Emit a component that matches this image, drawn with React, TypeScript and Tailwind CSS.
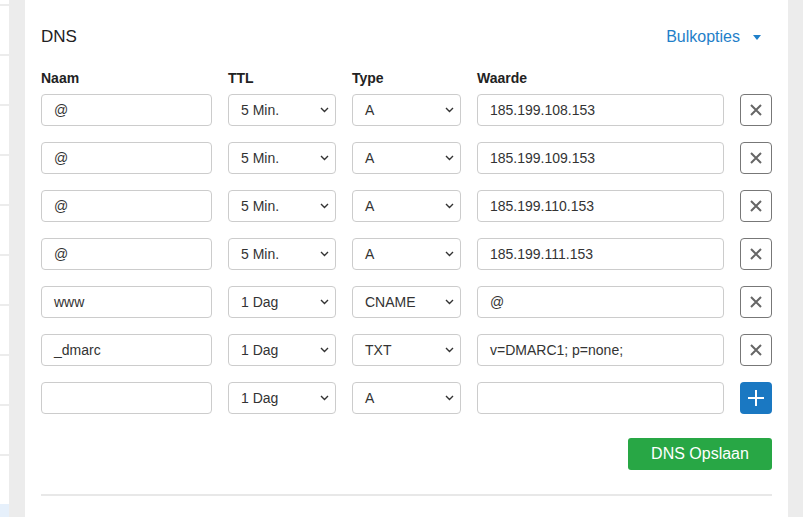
import React from 'react';

const rows = [
  { naam: '@', ttl: '5 Min.', type: 'A', waarde: '185.199.108.153' },
  { naam: '@', ttl: '5 Min.', type: 'A', waarde: '185.199.109.153' },
  { naam: '@', ttl: '5 Min.', type: 'A', waarde: '185.199.110.153' },
  { naam: '@', ttl: '5 Min.', type: 'A', waarde: '185.199.111.153' },
  { naam: 'www', ttl: '1 Dag', type: 'CNAME', waarde: '@' },
  { naam: '_dmarc', ttl: '1 Dag', type: 'TXT', waarde: 'v=DMARC1; p=none;' },
];

function Field({ value }: { value: string }) {
  return (
    <div className="h-8 rounded border border-[#cccccc] bg-white px-3 flex items-center text-[14px] text-[#333333]">
      {value}
    </div>
  );
}

function SelectBox({ value }: { value: string }) {
  return (
    <div className="h-8 rounded border border-[#cccccc] bg-white pl-3 pr-[6px] flex items-center justify-between text-[14px] text-[#333333]">
      <span>{value}</span>
      <svg width="9" height="6" viewBox="0 0 9 6" fill="none">
        <path d="M1 1l3.5 3.5L8 1" stroke="#333" strokeWidth="1.4" />
      </svg>
    </div>
  );
}

export default function App() {
  return (
    <div
      className="flex h-[517px] w-[803px] overflow-hidden bg-[#ececec]"
      style={{ fontFamily: '"Liberation Sans", Arial, sans-serif' }}
    >
      {/* sidebar edge */}
      <div className="w-[9px] bg-white flex flex-col">
        {Array.from({ length: 10 }).map((_, i) => (
          <div key={i} className="h-[50px] border-t-2 border-[#ececec] first:mt-[4px]" />
        ))}
        <div className="flex-1 bg-[#e6f0fb]" />
      </div>
      <div className="w-4" />

      <div className="w-[763px] bg-white px-4 pt-[26px]">
        <div className="flex items-center justify-between h-[22px]">
          <span className="text-[17px] text-[#222222]">DNS</span>
          <span className="flex items-center gap-[13px] pr-[11px] text-[16px] text-[#1f7fc9]">
            Bulkopties
            <svg width="8" height="5" viewBox="0 0 8 5">
              <path d="M0 0h8L4 5z" fill="#1f7fc9" />
            </svg>
          </span>
        </div>

        <div className="grid grid-cols-[171px_108px_109px_247px_32px] gap-x-4 mt-5 text-[14px] font-bold text-[#222222] h-[18px] items-center">
          <span>Naam</span>
          <span>TTL</span>
          <span>Type</span>
          <span>Waarde</span>
          <span />
        </div>

        <div className="flex flex-col gap-4 mt-2">
          {rows.map((r, i) => (
            <div key={i} className="grid grid-cols-[171px_108px_109px_247px_32px] gap-x-4">
              <Field value={r.naam} />
              <SelectBox value={r.ttl} />
              <SelectBox value={r.type} />
              <Field value={r.waarde} />
              <button className="h-8 w-8 rounded border border-[#777777] bg-white flex items-center justify-center">
                <svg width="12" height="12" viewBox="0 0 12 12">
                  <path d="M1 1l10 10M11 1L1 11" stroke="#666" strokeWidth="2" />
                </svg>
              </button>
            </div>
          ))}
          <div className="grid grid-cols-[171px_108px_109px_247px_32px] gap-x-4">
            <Field value="" />
            <SelectBox value="1 Dag" />
            <SelectBox value="A" />
            <Field value="" />
            <button className="h-8 w-8 rounded bg-[#1a78c2] flex items-center justify-center">
              <svg width="16" height="16" viewBox="0 0 16 16">
                <path d="M8 0v16M0 8h16" stroke="#fff" strokeWidth="2" />
              </svg>
            </button>
          </div>
        </div>

        <div className="flex justify-end mt-6">
          <button className="h-8 w-[144px] rounded-[3px] bg-[#28a745] text-white text-[16px] flex items-center justify-center">
            DNS Opslaan
          </button>
        </div>

        <div className="mt-6 h-[2px] bg-[#e8e8e8]" />
      </div>
    </div>
  );
}
